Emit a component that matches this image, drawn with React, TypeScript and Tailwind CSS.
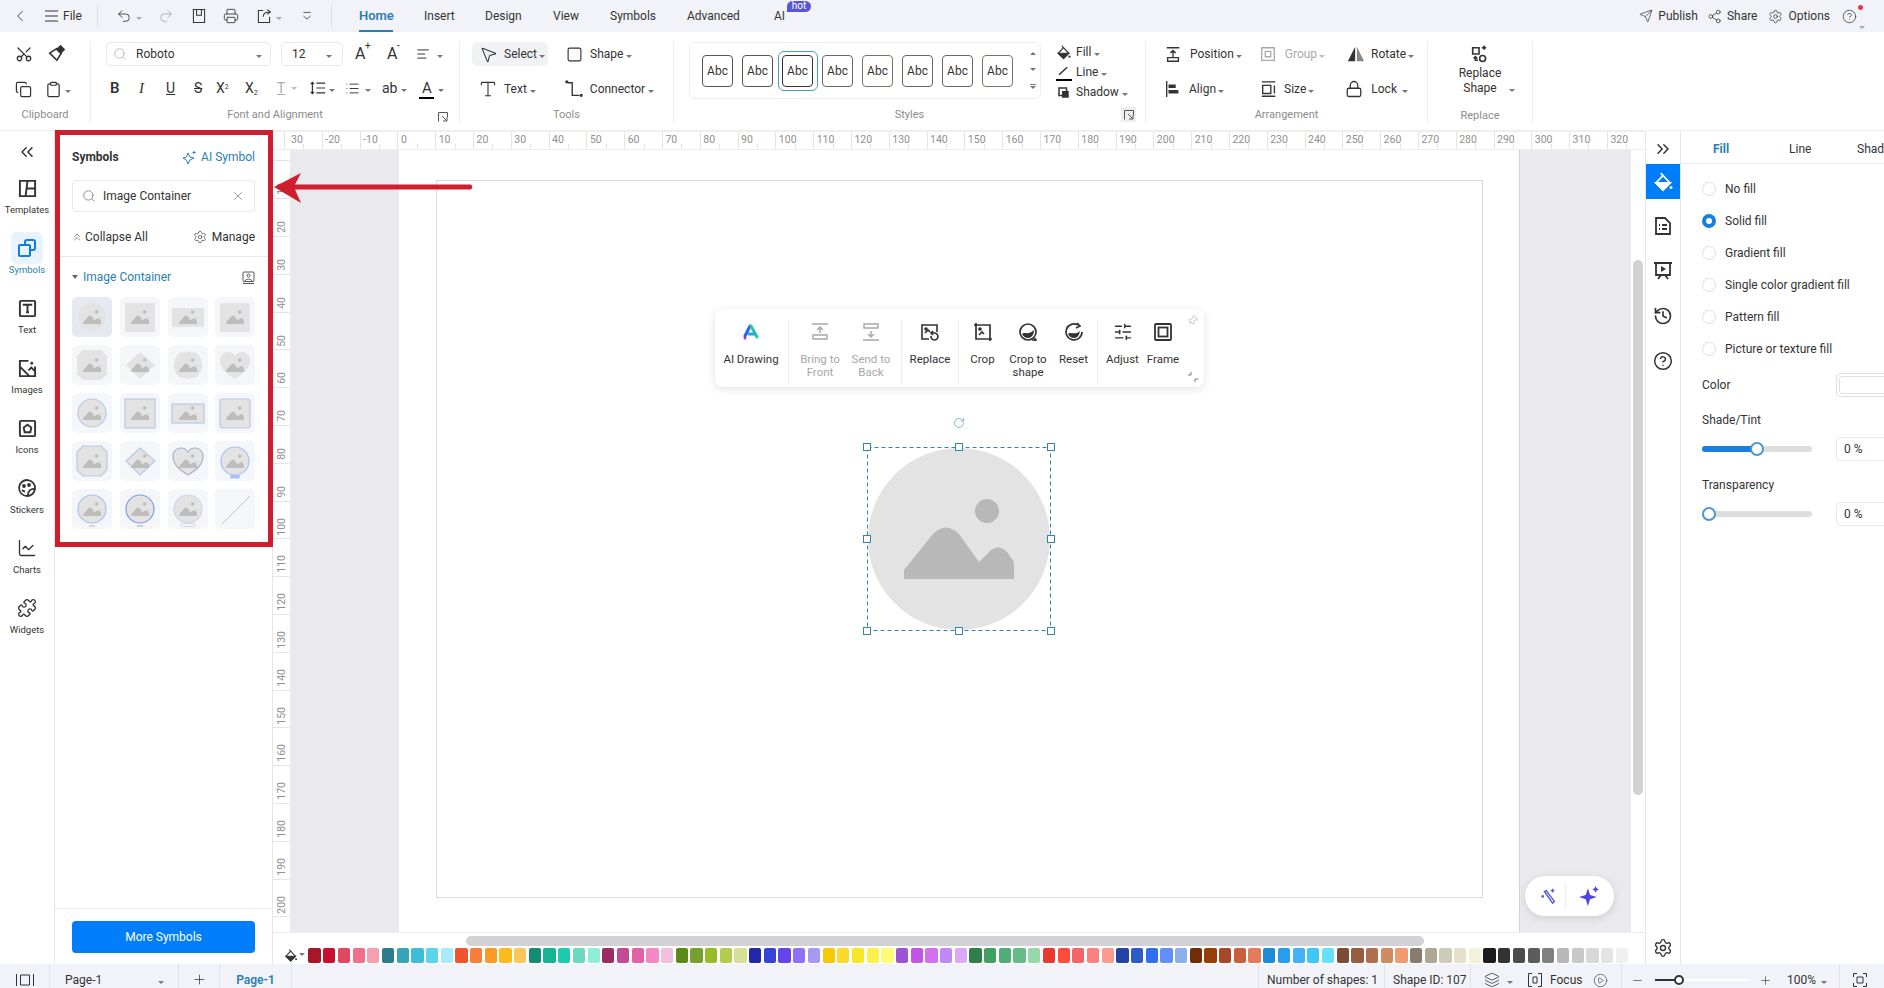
import React from "react";
import {
  ChevronLeft, Undo2, Redo2, Printer, Scissors, Copy, Clipboard, AlignLeft, List, MousePointer2, Square, Type, Send, Share2,
  Settings, CircleHelp, Lock, Search, X, ChevronsUp, ChevronsLeft, ChevronsRight, History, RotateCw, Pin, Minus, Plus, Layers,
  CirclePlay, Puzzle, ChartLine, SlidersHorizontal,
} from "lucide-react";

const Caret = ({ c = "border-t-[#777]" }: { c?: string }) => (
  <span className={`inline-block w-0 h-0 border-l-[3px] border-r-[3px] border-t-[3px] border-l-transparent border-r-transparent ${c}`} />
);

const Svg = ({ s = 18, children, w = 1.5, className = "" }: { s?: number; children: React.ReactNode; w?: number; className?: string }) => (
  <svg width={s} height={s} viewBox="0 0 20 20" fill="none" stroke="currentColor" strokeWidth={w} className={className}>{children}</svg>
);

const Bucket = ({ s = 15, w = 1.6 }: { s?: number; w?: number }) => (
  <svg width={s} height={s} viewBox="0 0 20 20" fill="none" stroke="currentColor" strokeWidth={w}>
    <path d="M8 1L10 4" />
    <path d="M10 3.500L17 11L10 18L3 11Z" />
    <path d="M3 11H17L10 18Z" fill="currentColor" />
    <circle cx="18" cy="15.500" r="1.500" fill="currentColor" stroke="none" />
  </svg>
);

const mountain = "M37 132V123L66 87Q79 74 92 87L112 115L122 105Q131 96 140 105L147 115V132Z";

const TABS: [string, string][] = [["Insert", "w-[61px]"], ["Design", "w-[68px]"], ["View", "w-[57px]"], ["Symbols", "w-[77px]"], ["Advanced", "w-[87px]"]];

function TopBar() {
  return (
    <div className="h-8 bg-[#f2f3f8] flex items-center text-[12px] text-[#333] shrink-0">
      <ChevronLeft size={18} strokeWidth={1.2} className="ml-[11px]" />
      <svg width="14" height="12" viewBox="0 0 14 12" stroke="#333" strokeWidth="1.2" className="ml-[16px]"><path d="M0 1H13M0 6H13M0 11H13" /></svg>
      <span className="ml-[4px] w-[34px]">File</span>
      <span className="w-px h-[20px] bg-[#dcdde3]" />
      <Undo2 size={16} strokeWidth={1.3} className="ml-[18px]" />
      <span className="ml-[4px]"><Caret c="border-t-[#aaa]" /></span>
      <Redo2 size={16} strokeWidth={1.3} className="ml-[16px] text-[#aaa]" />
      <Svg s={16} w={1.3} className="ml-[17px]"><path d="M3 2H17V18H3Z M7 2V9H13V2" /></Svg>
      <Printer size={16} strokeWidth={1.3} className="ml-[16px]" />
      <Svg s={16} w={1.3} className="ml-[17px]"><path d="M9 3H3V18H17V11M9 11C9 7 12 5 17 5M14 2L18 5L14 8" /></Svg>
      <span className="ml-[4px]"><Caret c="border-t-[#aaa]" /></span>
      <Svg s={12} w={1.3} className="ml-[19px]"><path d="M4 4H16M4 10L10 15L16 10" /></Svg>
      <span className="ml-[18px] w-px h-[20px] bg-[#dcdde3]" />
      <div className="ml-[27px] w-[65px] h-full relative flex items-center">
        <span className="text-[13px] font-semibold text-[#2a7fb0]">Home</span>
        <span className="absolute left-0 bottom-0 w-[34px] h-[2px] bg-[#2a7fb0]" />
      </div>
      {TABS.map(([t, w]) => (
        <span key={t} className={w}>{t}</span>
      ))}
      <span className="relative">AI<span className="absolute left-[13px] top-[-6px] w-[24px] h-[11px] rounded-[6px_6px_6px_0] bg-[#5a55d8] text-white text-[10px] leading-[10px] text-center">hot</span></span>
      <div className="ml-auto flex items-center">
        <Send size={14} strokeWidth={1.2} />
        <span className="ml-[5px]">Publish</span>
        <Share2 size={15} strokeWidth={1.2} className="ml-[9px]" />
        <span className="ml-[5px]">Share</span>
        <Settings size={15} strokeWidth={1.2} className="ml-[11px]" />
        <span className="ml-[5px]">Options</span>
        <span className="relative ml-[12px] mr-[27px] flex items-center">
          <CircleHelp size={15} strokeWidth={1.2} />
          <span className="absolute left-[16px] top-[-4px] w-[5px] h-[5px] rounded-full bg-[#ee3344]" />
          <span className="absolute left-[17px] top-[7px]"><Caret c="border-t-[#aaa]" /></span>
        </span>
      </div>
    </div>
  );
}

function Group({ className, label, children, labelClass = "justify-center" }: { className: string; label: string; children: React.ReactNode; labelClass?: string }) {
  return (
    <div className={`h-[81px] border-r border-[#eeeeee] flex flex-col ${className}`}>
      <div className="h-[59px] flex flex-col gap-[11px]">{children}</div>
      <div className={`h-[14px] mt-[7px] flex items-center text-[11px] text-[#8c8c8c] ${labelClass}`}>{label}</div>
    </div>
  );
}

const Launcher = () => (
  <svg width="10" height="10" viewBox="0 0 10 10" fill="none" stroke="#555" strokeWidth="1"><path d="M0.5 9.5V0.5H9.5V5M4 4L8.5 8.5M5 9H9V5" /></svg>
);

const Row = ({ children }: { children: React.ReactNode }) => <div className="h-6 flex items-center text-[12px] text-[#333]">{children}</div>;

const ABCS = ["border-[#555]", "border-[#555]", "border-[#333]", "border-[#666]", "border-[#7a7466]", "border-[#666]", "border-[#666]", "border-[#7a7466]"];

function Ribbon() {
  return (
    <div className="h-[99px] bg-white shrink-0 flex pt-[10px] border-b border-[#eeeeee] text-[#333]">
      <Group className="w-[91px]" label="Clipboard">
        <Row>
          <Scissors size={18} strokeWidth={1.7} className="ml-[15px] -rotate-90" />
          <Svg s={18} w={1.8} className="ml-[14px]"><path d="M3 9L11 4L16 9L11 17Z" /><path d="M11 5L15 1L19 5L15 9Z" fill="currentColor" /></Svg>
        </Row>
        <Row>
          <Copy size={17} strokeWidth={1.7} className="ml-[15px]" />
          <Clipboard size={17} strokeWidth={1.7} className="ml-[13px]" />
          <span className="ml-[3px]"><Caret /></span>
        </Row>
      </Group>
      <Group className="w-[369px]" label="Font and Alignment">
        <Row>
          <div className="ml-[15px] w-[165px] h-6 rounded-[5px] border border-[#e8e8e8] flex items-center px-[6px]">
            <Search size={14} strokeWidth={1.3} className="text-[#aaa]" />
            <span className="ml-[9px]">Roboto</span>
            <span className="ml-auto mr-[2px]"><Caret /></span>
          </div>
          <div className="ml-[10px] w-[62px] h-6 rounded-[5px] border border-[#e8e8e8] flex items-center pl-[10px] pr-[12px]">
            <span>12</span>
            <span className="ml-auto mr-[-2px]"><Caret /></span>
          </div>
          <span className="ml-[12px] text-[16px] w-[32px] relative">A<span className="absolute left-[10px] top-[-4px] text-[10px]">+</span></span>
          <span className="text-[16px] w-[24px] relative">A<span className="absolute left-[10px] top-[-4px] text-[10px]">-</span></span>
          <AlignLeft size={14} strokeWidth={1.7} className="ml-[5px]" />
          <span className="ml-[7px]"><Caret /></span>
        </Row>
        <Row>
          <span className="ml-[19px] w-[29px] text-[15px] font-semibold">B</span>
          <span className="w-[27px] text-[15px] italic font-['Liberation_Serif',serif]">I</span>
          <span className="w-[28px] text-[14px] underline">U</span>
          <span className="w-[22px] text-[14px] line-through">S</span>
          <span className="w-[29px] text-[14px]">X<sup className="text-[7px]">2</sup></span>
          <span className="w-[32px] text-[14px]">X<sub className="text-[7px]">2</sub></span>
          <span className="w-[14px] text-[14px] text-[#aaa] underline">T</span>
          <Caret c="border-t-[#bbb]" />
          <Svg s={16} className="ml-[13px]"><path d="M8 4H19M8 10H19M8 16H19M3 3V17M1 5L3 3L5 5M1 15L3 17L5 15" /></Svg>
          <span className="ml-[3px]"><Caret /></span>
          <List size={15} strokeWidth={1.5} className="ml-[10px]" />
          <span className="ml-[5px]"><Caret /></span>
          <span className="ml-[11px] text-[14px]">ab</span>
          <span className="ml-[4px]"><Caret /></span>
          <span className="ml-[12px] relative text-[15px] leading-[16px] w-[15px] text-center">A<span className="absolute left-0 right-0 bottom-[-3px] h-[2px] bg-black" /></span>
          <span className="ml-[4px]"><Caret /></span>
        </Row>
        <span className="relative self-end mr-[11px] mt-[-3px] h-0"><span className="absolute top-[4px] right-0"><Launcher /></span></span>
      </Group>
      <Group className="w-[214px]" label="Tools">
        <Row>
          <div className="ml-[12px] w-[76px] h-6 rounded-[5px] bg-[#f0f2f6] flex items-center pl-[7px]">
            <MousePointer2 size={19} strokeWidth={1.3} />
            <span className="ml-[6px]">Select</span>
            <span className="ml-[2px]"><Caret /></span>
          </div>
          <Square size={17} strokeWidth={1.6} className="ml-[18px]" />
          <span className="ml-[7px]">Shape</span>
          <span className="ml-[3px]"><Caret /></span>
        </Row>
        <Row>
          <Type size={20} strokeWidth={1.3} className="ml-[18px]" />
          <span className="ml-[6px]">Text</span>
          <span className="ml-[3px]"><Caret /></span>
          <Svg s={18} className="ml-[29px]"><path d="M3 3H8V17H16" /><circle cx="2" cy="2" r="1" fill="currentColor" /><circle cx="18" cy="17" r="1" fill="currentColor" /></Svg>
          <span className="ml-[7px]">Connector</span>
          <span className="ml-[3px]"><Caret /></span>
        </Row>
      </Group>
      <div className="w-[472px] h-[81px] border-r border-[#eeeeee] flex flex-col">
        <div className="flex">
          <div className="ml-[15px] w-[352px] h-[57px] rounded-[6px] border border-[#eeeeee] flex items-center pl-[12px] shrink-0">
            {ABCS.map((c, i) => (
              <div key={i} className={i === 2 ? "w-[40px] h-[40px] rounded-[6px] border border-[#4a9cc4] flex items-center justify-center -mx-[4.5px] shrink-0" : "w-[31px] h-[32px] shrink-0"}>
                <div className={`w-[31px] h-[32px] rounded-[4px] border ${c} flex items-center justify-center text-[12px]`}>Abc</div>
              </div>
            )).flatMap((el, i) => (i === 0 ? [el] : [<span key={`g${i}`} className="w-[9px] shrink-0" />, el]))}
            <div className="ml-[17px] flex flex-col items-center gap-[13px] text-[#777]">
              <span className="rotate-180 flex"><Caret /></span>
              <Caret />
              <span className="flex flex-col items-center gap-[1px]"><span className="w-[6px] h-px bg-[#777]" /><Caret /></span>
            </div>
          </div>
          <div className="ml-[15px] flex flex-col text-[12px] h-[60px]">
            <div className="h-[20px] flex items-center">
              <Bucket />
              <span className="ml-[5px]">Fill</span><span className="ml-[3px]"><Caret /></span>
            </div>
            <div className="h-[20px] flex items-center relative">
              <Svg s={15} w={2}><path d="M4 13L15 3" /></Svg>
              <span className="absolute left-0 bottom-[1px] w-[16px] h-[2px] bg-black" />
              <span className="ml-[5px]">Line</span><span className="ml-[3px]"><Caret /></span>
            </div>
            <div className="h-[20px] flex items-center">
              <Svg s={15} w={2}><path d="M4 4H14V14H4Z" /><path d="M8 8H17V17H8Z" fill="currentColor" stroke="none" /></Svg>
              <span className="ml-[5px]">Shadow</span><span className="ml-[3px]"><Caret /></span>
            </div>
          </div>
        </div>
        <div className="relative h-[14px] mt-[6px] flex items-center justify-center text-[11px] text-[#8c8c8c]">
          Styles
          <span className="absolute right-[9px] top-[-1px] w-[15px] h-[15px] bg-[#eeeeee] flex items-center justify-center"><Launcher /></span>
        </div>
      </div>
      <Group className="w-[282px]" label="Arrangement">
        <Row>
          <Svg s={18} className="ml-[18px]"><path d="M3 3H17M10 14V6M7 9L10 6L13 9M4 14H16V18H4Z" /></Svg>
          <span className="ml-[8px]">Position</span><span className="ml-[2px]"><Caret /></span>
          <Svg s={18} className="ml-[17px] text-[#aaa]"><path d="M3 3H17V17H3Z M7 7H13V13H7Z" /></Svg>
          <span className="ml-[8px] text-[#aaa]">Group</span><span className="ml-[2px]"><Caret c="border-t-[#bbb]" /></span>
          <Svg s={18} className="ml-[22px]" w={0}><path d="M9 2V18H1Z" fill="#333" /><path d="M11 2V18H19Z" fill="#888" /></Svg>
          <span className="ml-[6px]">Rotate</span><span className="ml-[2px]"><Caret /></span>
        </Row>
        <Row>
          <Svg s={18} className="ml-[18px]"><path d="M3 1V19" /><path d="M5 5H13V9H5ZM5 11H16V15H5Z" fill="currentColor" stroke="none" /></Svg>
          <span className="ml-[7px]">Align</span><span className="ml-[2px]"><Caret /></span>
          <Svg s={18} className="ml-[36px]"><path d="M2 2H17M2 18H17M3 6H12V15H3ZM16 6V15" /></Svg>
          <span className="ml-[6px]">Size</span><span className="ml-[2px]"><Caret /></span>
          <Lock size={18} strokeWidth={1.7} className="ml-[31px]" />
          <span className="ml-[8px]">Lock</span><span className="ml-[5px]"><Caret /></span>
        </Row>
      </Group>
      <div className="w-[105px] h-[81px] border-r border-[#eeeeee] flex flex-col items-center text-[12px] leading-[15px]">
        <Svg s={18} className="mt-[3px] mr-[2px]" w={1.8}><path d="M3 3H10V10H3Z" /><circle cx="14" cy="15" r="3.3" /><path d="M13 3H17M15 1L17 3L15 5M6 13V17H9M4 15L6 13L8 15" /></Svg>
        <span className="mt-[3px]">Replace</span>
        <span className="relative">Shape<span className="absolute left-[46px] top-0"><Caret /></span></span>
        <span className="mt-[12px] text-[11px] text-[#8c8c8c]">Replace</span>
      </div>
    </div>
  );
}

const Rail = ({ label, active, icon }: { label: string; active?: boolean; icon: React.ReactNode }) => (
  <div className={`h-[60px] flex flex-col items-center pt-[3px] text-[9.5px] ${active ? "text-[#2a7fb0]" : "text-[#333]"}`}>
    <div className={`w-8 h-8 rounded-[6px] flex items-center justify-center ${active ? "bg-[#e9f3fd]" : ""}`}>{icon}</div>
    <span className="-mt-px leading-[14px]">{label}</span>
  </div>
);

function LeftRail() {
  return (
    <div className="w-[55px] shrink-0 flex flex-col items-stretch border-r border-[#e6e6e6]">
      <div className="h-[42px] -mb-[4px] flex items-center justify-center"><ChevronsLeft size={20} strokeWidth={1.8} className="text-[#333]" /></div>
      <Rail label="Templates" icon={<Svg s={19} w={2}><path d="M2 2H18V18H2ZM10 2L8 18M9 10H18" /></Svg>} />
      <Rail label="Symbols" active icon={<Svg s={20} w={2} className="text-[#0b7ee0]"><path d="M8 7V4C8 3 9 2 10 2H16C17 2 18 3 18 4V10C18 11 17 12 16 12H13M3 7H12C12.500 7 13 7.500 13 8V17C13 17.500 12.500 18 12 18H3C2.500 18 2 17.500 2 17V8C2 7.500 2.500 7 3 7Z" /></Svg>} />
      <Rail label="Text" icon={<Svg s={19} w={2}><rect x="2" y="2" width="16" height="16" rx="1" /><path d="M6 7V6H14V7M10 6V14M8.500 14H11.500" /></Svg>} />
      <Rail label="Images" icon={<Svg s={19} w={2}><path d="M11 2H2V18H18V8M2 8L12 18M11 12L14 9L18 13" /><circle cx="14.500" cy="4.500" r="1.500" fill="currentColor" stroke="none" /></Svg>} />
      <Rail label="Icons" icon={<Svg s={19} w={2}><rect x="2" y="2" width="16" height="16" rx="1" /><path d="M10 6L14 9L13 14H7L6 9Z" /></Svg>} />
      <Rail label="Stickers" icon={<Svg s={20} w={1.8}><path d="M18 11A8 8 0 1 0 10 18C14 18 17 15 18 11ZM18 11C14 10 11 13 11 17" /><circle cx="7" cy="8" r="1" fill="currentColor" /><circle cx="12" cy="7" r="1" fill="currentColor" /><path d="M5 12C6 13 7 13.500 8 13.500" /></Svg>} />
      <Rail label="Charts" icon={<ChartLine size={20} strokeWidth={1.6} />} />
      <Rail label="Widgets" icon={<Puzzle size={20} strokeWidth={1.6} />} />
    </div>
  );
}

type V = "circle" | "square" | "wide" | "round" | "oct" | "diamond" | "scallop" | "heart" | "line";

const shapes: Record<string, React.ReactNode> = {
  circle: <circle cx="20" cy="20" r="14" />,
  square: <rect x="5" y="6" width="30" height="29" />,
  wide: <rect x="4" y="11" width="32" height="19" />,
  round: <rect x="5" y="6" width="30" height="29" rx="2.500" />,
  oct: <path d="M11 5H29L35 11V29L29 35H11L5 29V11Z" />,
  diamond: <path d="M20 7L35 20L20 34L6 20Z" />,
  scallop: <path d="M20 6L24 7.500L28 7.500L31 10.500L33 14L34 18V22L33 26L31 29.500L28 32.500L24 33L20 34L16 33L12 32.500L9 29.500L7 26L6 22V18L7 14L9 10.500L12 7.500L16 7.500Z" />,
  heart: <path d="M20 34C12 29 5 24 5 15C5 10 9 7 13 7C16 7 18.500 8.500 20 11C21.500 8.500 24 7 27 7C31 7 35 10 35 15C35 24 28 29 20 34Z" />,
};

function Thumb({ v, blue, extra, sel, stroke = "#b9c9e6" }: { v: V; blue?: boolean; extra?: React.ReactNode; sel?: boolean; stroke?: string }) {
  return (
    <div className={`w-10 h-10 rounded-[5px] ${sel ? "bg-[#e6e9f2]" : "bg-[#f5f6fa]"}`}>
      <svg width="40" height="40" viewBox="0 0 40 40">
        {v === "line" ? (
          <path d="M7 35L35 7" stroke="#a8a8a8" strokeWidth="0.700" />
        ) : (
          <>
            <g fill="#e3e3e3" stroke={blue ? stroke : "none"} strokeWidth="1.200">{shapes[v]}</g>
            <circle cx="24.700" cy="15" r="1.800" fill="#bdbdbd" />
            <path d="M11.300 27V25L16.500 19.200Q18 17.800 19.500 19.200L22.800 23.500L24.500 21.800Q26 20.500 27.500 21.800L29 24V27Z" fill="#bdbdbd" />
            {extra}
          </>
        )}
      </svg>
    </div>
  );
}

function SymbolsPanel() {
  return (
    <div className="w-[218px] shrink-0 flex flex-col border-r border-[#e6e6e6] text-[12px] text-[#333]">
      <div className="h-[126px] px-[17px] pt-[19px] border-b border-[#e8e8e8] flex flex-col">
        <div className="flex items-center h-[14px]">
          <span className="font-bold">Symbols</span>
          <span className="ml-auto flex items-center text-[#2a7fb0]">
            <svg width="15" height="15" viewBox="0 0 15 15" fill="none" stroke="currentColor" strokeWidth="1"><path d="M6 3L8 7L12 8L8 10L6 14L4.500 10L1 8L4.500 7Z" /><path d="M12 1V4M10.500 2.500H13.500" /></svg>
            <span className="ml-[4px]">AI Symbol</span>
          </span>
        </div>
        <div className="mt-[16px] h-[32px] rounded-[4px] border border-[#e8e8e8] flex items-center px-[9px]">
          <Search size={14} strokeWidth={1.6} className="text-[#888]" />
          <span className="ml-[7px]">Image Container</span>
          <X size={14} strokeWidth={1} className="ml-auto text-[#555]" />
        </div>
        <div className="mt-[16px] flex items-center">
          <ChevronsUp size={12} strokeWidth={1.2} className="-ml-px" />
          <span className="ml-[2px]">Collapse All</span>
          <Settings size={14} strokeWidth={1.1} className="ml-auto" />
          <span className="ml-[5px]">Manage</span>
        </div>
      </div>
      <div className="px-[17px] pt-[13px] flex-1">
        <div className="flex items-center h-[14px] text-[#2a7fb0]">
          <span className="w-0 h-0 border-l-[3.5px] border-r-[3.5px] border-t-[4px] border-l-transparent border-r-transparent border-t-[#666]" />
          <span className="ml-[5px]">Image Container</span>
          <svg className="ml-auto" width="13" height="13" viewBox="0 0 13 13" fill="none" stroke="#444" strokeWidth="0.900"><rect x="1" y="1" width="11" height="9.500" rx="1" /><circle cx="6.500" cy="4.500" r="1.500" /><path d="M3 10C3.500 7.500 9.500 7.500 10 10M1 12.500H12" /></svg>
        </div>
        <div className="mt-[13px] grid grid-cols-4 gap-2">
          <Thumb v="circle" sel /><Thumb v="square" /><Thumb v="wide" /><Thumb v="round" />
          <Thumb v="oct" /><Thumb v="diamond" /><Thumb v="scallop" /><Thumb v="heart" />
          <Thumb v="circle" blue /><Thumb v="square" blue /><Thumb v="wide" blue /><Thumb v="round" blue />
          <Thumb v="oct" blue /><Thumb v="diamond" blue /><Thumb v="heart" blue stroke="#a8b2c8" /><Thumb v="circle" blue stroke="#a9c0f0" extra={<rect x="15" y="34" width="10" height="3.500" rx="1.700" fill="#a9c0f0" />} />
          <Thumb v="circle" blue stroke="#a9c0f0" extra={<path d="M17 37H23" stroke="#999" strokeWidth="0.600" />} />
          <Thumb v="circle" blue stroke="#7f9fe0" extra={<path d="M17 37H23" stroke="#999" strokeWidth="0.800" />} />
          <Thumb v="circle" blue stroke="#cdd6ea" extra={<rect x="13" y="34.500" width="14" height="3" rx="1.500" fill="none" stroke="#b9c9e6" strokeWidth="0.600" />} />
          <Thumb v="line" />
        </div>
      </div>
      <div className="h-[56px] border-t border-[#e8e8e8] px-[17px] pt-[12px]">
        <div className="h-[32px] rounded-[4px] bg-[#007dfb] text-white flex items-center justify-center">More Symbols</div>
      </div>
    </div>
  );
}

const XLAB = ["30", "-20", "-10", "0", "10", "20", "30", "40", "50", "60", "70", "80", "90", "100", "110", "120", "130", "140", "150", "160", "170", "180", "190", "200", "210", "220", "230", "240", "250", "260", "270", "280", "290", "300", "310", "320"];
const YLAB = ["10", "20", "30", "40", "50", "60", "70", "80", "90", "100", "110", "120", "130", "140", "150", "160", "170", "180", "190", "200"];

const PALETTE = [
  "bg-[#a5182a]", "bg-[#c8102e]", "bg-[#e04862]", "bg-[#f0708a]", "bg-[#f5a0b0]",
  "bg-[#2a7c8e]", "bg-[#38a4bc]", "bg-[#3fbcd8]", "bg-[#5cd4ec]", "bg-[#a8ecfb]",
  "bg-[#f0552c]", "bg-[#f77f3c]", "bg-[#fb9a24]", "bg-[#fcbb1c]", "bg-[#fbc65c]",
  "bg-[#128c74]", "bg-[#16b394]", "bg-[#1ecbad]", "bg-[#6cd8c0]", "bg-[#90eed8]",
  "bg-[#9b2c64]", "bg-[#c24c94]", "bg-[#e260a8]", "bg-[#f487c4]", "bg-[#f0c0dc]",
  "bg-[#5c8a18]", "bg-[#78a030]", "bg-[#98bc28]", "bg-[#b4cc4c]", "bg-[#d4e098]",
  "bg-[#2028a8]", "bg-[#3444d8]", "bg-[#6444ec]", "bg-[#9070f8]", "bg-[#a898f4]",
  "bg-[#f8c808]", "bg-[#fcd82c]", "bg-[#f4e828]", "bg-[#fcf04c]", "bg-[#fcfc78]",
  "bg-[#9c54d4]", "bg-[#c454e4]", "bg-[#d470ec]", "bg-[#c088f4]", "bg-[#dca8f8]",
  "bg-[#2f8048]", "bg-[#40a060]", "bg-[#50ac78]", "bg-[#64bc88]", "bg-[#98d8a8]",
  "bg-[#e83830]", "bg-[#fc4c3c]", "bg-[#f46468]", "bg-[#fc8080]", "bg-[#fc9c90]",
  "bg-[#2444a4]", "bg-[#2c5cc8]", "bg-[#3070f0]", "bg-[#6090f8]", "bg-[#8cb0ec]",
  "bg-[#742c08]", "bg-[#983c08]", "bg-[#a84828]", "bg-[#c86040]", "bg-[#e47c5c]",
  "bg-[#1c8cd8]", "bg-[#2c9cec]", "bg-[#44b0f8]", "bg-[#40c8f4]", "bg-[#68e0fc]",
  "bg-[#7c4c34]", "bg-[#985c40]", "bg-[#b07050]", "bg-[#d08c60]", "bg-[#f09c70]",
  "bg-[#887c70]", "bg-[#aca894]", "bg-[#ccccb8]", "bg-[#e4e0cc]", "bg-[#f4f0dc]",
  "bg-[#1c1c1c]", "bg-[#333333]", "bg-[#4c4c4c]", "bg-[#5c5c5c]", "bg-[#808080]",
  "bg-[#b8b8b8]", "bg-[#c8c8c8]", "bg-[#d8d8d8]", "bg-[#e4e4e4]", "bg-[#f0f0f0]",
  "bg-[#ffffff]",
];

const Tool = ({ icon, l1, l2, w, dim }: { icon: React.ReactNode; l1: string; l2?: string; w: string; dim?: boolean }) => (
  <div className={`${w} flex flex-col items-center text-[11.5px] leading-[13px] ${dim ? "text-[#a8a8a8]" : "text-[#333]"}`}>
    <div className="h-[22px] flex items-center -mt-px">{icon}</div>
    <span className="mt-[10px] whitespace-nowrap">{l1}</span>
    {l2 && <span className="whitespace-nowrap">{l2}</span>}
  </div>
);
const VSep = () => <span className="w-px h-[64px] bg-[#eeeeee] self-center" />;

function FloatBar() {
  return (
    <div className="absolute left-[425px] top-[159px] w-[489px] h-[78px] bg-white rounded-[8px] shadow-[0_2px_10px_rgba(0,0,0,0.12)] flex pt-[13px] items-start">
      <Tool w="w-[72px] mr-px" l1="AI Drawing" icon={
        <svg width="18" height="18" viewBox="0 0 18 18" fill="none" strokeWidth="3" strokeLinecap="round"><path d="M8 3L3 13" stroke="#2563eb" /><path d="M9 3L15 14" stroke="#22c9a8" /><path d="M7 11H12" stroke="#2aa0e0" /><circle cx="3" cy="15" r="1.500" fill="#c026d3" stroke="none" /></svg>
      } />
      <div className="self-stretch flex items-start -mt-[6px]"><VSep /></div>
      <Tool w="w-[62px]" dim l1="Bring to" l2="Front" icon={<Svg s={20} w={1.4}><path d="M2 2H18M10 11V5M7 8L10 5L13 8M3 13H17V17H3Z" /></Svg>} />
      <Tool w="w-[40px] mr-[10px]" dim l1="Send to" l2="Back" icon={<Svg s={20} w={1.4}><path d="M3 2H17V6H3ZM10 9V15M7 12L10 15L13 12M2 18H18" /></Svg>} />
      <div className="self-stretch flex items-start -mt-[6px]"><VSep /></div>
      <Tool w="w-[56px]" l1="Replace" icon={<Svg s={20} w={1.6}><path d="M9 17H2V3H17V10M5 11L8 8L10 10" /><circle cx="6" cy="7" r="1" fill="currentColor" /><path d="M11 14A3.500 3.500 0 1 0 14 11H12M13 9L11 11L13 13" /></Svg>} />
      <div className="self-stretch flex items-start -mt-[6px]"><VSep /></div>
      <Tool w="w-[47px]" l1="Crop" icon={<Svg s={20} w={1.7}><path d="M1 3H17V19M3 1V17H19M6 13L9 10L11 12" /><circle cx="7" cy="7" r="1" fill="currentColor" /></Svg>} />
      <Tool w="w-[44px]" l1="Crop to" l2="shape" icon={<Svg s={20} w={1.7}><circle cx="10" cy="10" r="8" /><path d="M4 12C7 9 10 14 16 8C16 12 14 16 10 16C7 16 5 14 4 12Z" fill="currentColor" stroke="none" /><path d="M14 18H19M17 16V19" /></Svg>} />
      <Tool w="w-[47px]" l1="Reset" icon={<Svg s={20} w={1.7}><path d="M18 10A8 8 0 1 1 14 3M13 1L16 4L12 6" /><path d="M4 12C7 9 10 14 16 9C15 13 14 16 10 16C7 16 5 14 4 12Z" fill="currentColor" stroke="none" /></Svg>} />
      <div className="self-stretch flex items-start -mt-[6px]"><VSep /></div>
      <Tool w="w-[49px]" l1="Adjust" icon={<SlidersHorizontal size={20} strokeWidth={1.7} />} />
      <Tool w="w-[32px]" l1="Frame" icon={<Svg s={20} w={1.8}><rect x="2" y="2" width="16" height="16" rx="1" /><rect x="5.500" y="5.500" width="9" height="9" /></Svg>} />
      <Pin size={11} strokeWidth={1} className="absolute right-[6px] top-[6px] text-[#888] rotate-45" />
      <svg className="absolute right-[6px] bottom-[5px]" width="10" height="10" viewBox="0 0 10 10" fill="none" stroke="#777"><path d="M0 3H3V0M7 10V7H10" /></svg>
    </div>
  );
}

const Handle = ({ className }: { className: string }) => (
  <span className={`absolute w-[8px] h-[8px] bg-white border border-[#2f86a8] ${className}`} />
);

function Selection() {
  return (
    <div className="absolute left-[577px] top-[297px] w-[184px] h-[184px]">
      <RotateCw size={12} strokeWidth={1.2} className="absolute left-[86px] top-[-30px] text-[#3a8db0]" />
      <svg width="184" height="184" viewBox="0 0 184 184" className="absolute inset-0">
        <circle cx="92" cy="92" r="91" fill="#e3e3e3" />
        <circle cx="120" cy="64" r="12" fill="#b8b8b8" />
        <path d={mountain} fill="#b8b8b8" />
        <rect x="0.500" y="0.500" width="183" height="183" fill="none" stroke="#2f86a8" strokeDasharray="4 3" />
      </svg>
      <Handle className="left-[-4px] top-[-4px]" />
      <Handle className="left-[88px] top-[-4px]" />
      <Handle className="right-[-4px] top-[-4px]" />
      <Handle className="left-[-4px] top-[88px]" />
      <Handle className="right-[-4px] top-[88px]" />
      <Handle className="left-[-4px] bottom-[-4px]" />
      <Handle className="left-[88px] bottom-[-4px]" />
      <Handle className="right-[-4px] bottom-[-4px]" />
    </div>
  );
}

function Center() {
  return (
    <div className="w-[1373px] shrink-0 flex flex-col border-r border-[#e6e6e6]">
      <div className="h-[18px] flex overflow-hidden border-t border-[#eeeeee] shrink-0 pr-[14px]">
        <div className="w-[11px] shrink-0" />
        {XLAB.map((t, i) => (
          <div key={i} className="w-[37.8px] shrink-0 flex border-l border-[#e4e4e4] text-[10.5px] leading-[16px] text-[#8f8f8f]">
            <span className={`w-[18.4px] shrink-0 whitespace-nowrap ${i === 0 ? "pl-[6px]" : "pl-[2.5px]"}`}>{t}</span>
            <span className="self-end w-px h-[5px] bg-[#e4e4e4]" />
          </div>
        ))}
      </div>
      <div className="h-[783px] flex shrink-0 border-t border-[#eeeeee]">
        <div className="w-[17px] shrink-0 flex flex-col overflow-hidden">
          <div className="h-[11.400px] shrink-0 border-b border-[#e4e4e4]" />
          {YLAB.map((t) => (
            <div key={t} className="h-[37.8px] shrink-0 border-b border-[#e4e4e4] flex items-end justify-center pb-[3px]">
              <span className="[writing-mode:vertical-rl] rotate-180 text-[10.5px] leading-[14px] text-[#8f8f8f]">{t}</span>
            </div>
          ))}
        </div>
        <div className="relative w-[1341px] shrink-0 bg-[#e9e9ee] overflow-hidden">
          <div className="ml-[109px] w-[1121px] h-full bg-white pt-[30px] px-[37px] border-r border-[#d4d4d8]">
            <div className="w-[1047px] h-[718px] border border-[#d9d9d9]" />
          </div>
          <FloatBar />
          <Selection />
          <div className="absolute left-[1235px] top-[726px] w-[89px] h-[40px] rounded-full bg-white shadow-[0_2px_8px_rgba(0,0,0,0.12)] flex items-center">
            <Svg s={18} w={1.6} className="ml-[15px] text-[#5b5bd6]"><path d="M5 5L14 18L16 16L7 4Z" /><path d="M14 2V6M12 4H16M3 9V12M1.500 10.500H4.500" /></Svg>
            <span className="ml-[7px] w-px h-[24px] bg-[#eeeeee]" />
            <svg className="ml-[12px]" width="22" height="22" viewBox="0 0 20 20" fill="#4f46e5"><path d="M9 3L11 9L17 11L11 13L9 19L7 13L1 11L7 9Z" /><path d="M16 1L17 3L19 4L17 5L16 7L15 5L13 4L15 3Z" /></svg>
          </div>
        </div>
        <div className="w-[14px] shrink-0 pl-[2px]">
          <div className="mt-[110px] w-[10px] h-[535px] rounded-full bg-[#d2d2d4]" />
        </div>
      </div>
      <div className="h-[15px] border-t border-[#eeeeee] shrink-0 pl-[193px] pt-[3px]">
        <div className="w-[958px] h-[10px] rounded-full bg-[#d2d2d4]" />
      </div>
      <div className="h-[17px] flex items-start shrink-0 pl-[11px] pt-[1px] text-[#333]">
        <Bucket s={15} />
        <span className="mt-[5px] ml-[2px] mr-[3px] flex"><Caret /></span>
        {PALETTE.map((c, i) => (
          <span key={i} className={`w-[12.300px] h-[15px] mr-[2.400px] rounded-[2px] shrink-0 ${c}`} />
        ))}
      </div>
    </div>
  );
}

const Radio = ({ on, label }: { on?: boolean; label: string }) => (
  <div className="h-[32px] flex items-center">
    <span className={on ? "w-[14px] h-[14px] rounded-full border-[4px] border-[#1a7fdc] bg-white" : "w-[14px] h-[14px] rounded-full border border-[#dddddd] bg-white"} />
    <span className="ml-[9px]">{label}</span>
  </div>
);

const Pct = () => (
  <div className="w-[60px] h-[24px] rounded-[4px] border border-[#e8e8e8] flex items-center pl-[7px] shrink-0">0 %</div>
);

function RightSide() {
  return (
    <>
      <div className="w-[35px] shrink-0 flex flex-col items-center border-r border-[#e6e6e6] text-[#333]">
        <div className="h-[33px] flex items-center pt-[2px]"><ChevronsRight size={20} strokeWidth={1.8} /></div>
        <div className="w-full h-[35px] bg-[#007dfb] flex items-center justify-center text-white">
          <Bucket s={20} w={1.8} />
        </div>
        <div className="mt-[17px] flex flex-col items-center gap-[25px]">
          <Svg s={20} w={1.8}><path d="M3 2H12L17 7V18H3Z M6 9H7M9 9H14M6 13H7M9 13H14" /></Svg>
          <Svg s={20} w={1.8}><path d="M1 2H19M3 2V14H17V2M5 18L8 14M15 18L12 14" /><path d="M8 5L13 8L8 11Z" fill="currentColor" stroke="none" /></Svg>
          <History size={20} strokeWidth={2} />
          <CircleHelp size={20} strokeWidth={1.8} />
        </div>
        <Settings size={20} strokeWidth={1.6} className="mt-auto mb-[6px]" />
      </div>
      <div className="flex-1 min-w-0 overflow-hidden text-[12px] text-[#333] flex flex-col">
        <div className="h-[33px] border-b border-[#eeeeee] flex items-center shrink-0 pt-[3px]">
          <span className="ml-[32px] w-[76px] shrink-0 font-bold text-[#2a7fb0]">Fill</span>
          <span className="w-[68px] shrink-0">Line</span>
          <span className="shrink-0 whitespace-nowrap">Shadow</span>
        </div>
        <div className="pl-[21px] pt-[9px]">
          <Radio label="No fill" />
          <Radio on label="Solid fill" />
          <Radio label="Gradient fill" />
          <Radio label="Single color gradient fill" />
          <Radio label="Pattern fill" />
          <Radio label="Picture or texture fill" />
          <div className="flex items-center h-[24px] mt-[8px]">
            <span className="w-[134px] shrink-0">Color</span>
            <div className="w-[60px] h-[24px] rounded-[4px] border border-[#e0e0e0] p-[2px] shrink-0"><div className="w-full h-full rounded-[3px] border border-[#e0e0e0]" /></div>
          </div>
          <div className="mt-[15px] leading-[16px]">Shade/Tint</div>
          <div className="mt-[9px] flex items-center w-[300px]">
            <div className="w-[110px] h-[6px] rounded-full bg-[#dddddd] relative mr-[24px] shrink-0">
              <div className="w-[55px] h-[6px] rounded-full bg-[#1a7fdc]" />
              <span className="absolute left-[48px] top-[-4px] w-[14px] h-[14px] rounded-full bg-white border-2 border-[#4a97d8]" />
            </div>
            <Pct />
          </div>
          <div className="mt-[16px] leading-[16px]">Transparency</div>
          <div className="mt-[9px] flex items-center w-[300px]">
            <div className="w-[110px] h-[6px] rounded-full bg-[#dddddd] relative mr-[24px] shrink-0">
              <span className="absolute left-0 top-[-4px] w-[14px] h-[14px] rounded-full bg-white border-2 border-[#4a97d8]" />
            </div>
            <Pct />
          </div>
        </div>
      </div>
    </>
  );
}

const BarSep = () => <span className="w-px h-[24px] bg-[#e2e3e8] shrink-0" />;

function StatusBar() {
  return (
    <div className="h-6 bg-[#f2f3f8] flex items-start text-[12px] text-[#333] shrink-0">
      <div className="w-[49px] h-[24px] flex items-center justify-center pt-[8px]">
        <svg width="18" height="12" viewBox="0 0 18 12" fill="none" stroke="#333"><path d="M0.500 0V12M4.500 1H13.500V11H4.500ZM17.500 0V12" /></svg>
      </div>
      <BarSep />
      <div className="w-[128px] h-[24px] flex items-center pt-[8px] pl-[15px]">
        <span>Page-1</span><span className="ml-auto mr-[14px]"><Caret c="border-t-[#777]" /></span>
      </div>
      <BarSep />
      <div className="w-[40px] h-[24px] flex items-center justify-center pt-[6px]"><Plus size={15} strokeWidth={1.2} /></div>
      <BarSep />
      <div className="w-[71px] h-[24px] flex items-center justify-center pt-[8px] font-semibold text-[#2a7fb0]">Page-1</div>
      <BarSep />
      <div className="ml-[966px] flex items-start">
        <BarSep />
        <span className="w-[125px] h-[24px] flex items-center pt-[8px] pl-[8px] whitespace-nowrap">Number of shapes: 1</span>
        <BarSep />
        <span className="w-[85px] h-[24px] flex items-center pt-[8px] pl-[8px] whitespace-nowrap">Shape ID: 107</span>
        <BarSep />
        <div className="w-[150px] h-[24px] flex items-center pt-[8px]">
          <Layers size={16} strokeWidth={1.2} className="ml-[13px]" />
          <span className="ml-[7px]"><Caret /></span>
          <svg className="ml-[15px]" width="14" height="14" viewBox="0 0 14 14" fill="none" stroke="#333"><path d="M4 0.500H0.500V13.500H4M10 0.500H13.500V13.500H10M5 4H9V10H5Z" /></svg>
          <span className="ml-[8px]">Focus</span>
          <CirclePlay size={15} strokeWidth={1} className="ml-[11px]" />
        </div>
        <BarSep />
        <div className="w-[217px] h-[24px] flex items-center pt-[8px]">
          <Minus size={13} strokeWidth={1.2} className="ml-[9px]" />
          <div className="ml-[11px] w-[94px] h-[2px] bg-white relative">
            <div className="w-[24px] h-[2px] bg-[#333]" />
            <span className="absolute left-[19px] top-[-4px] w-[10px] h-[10px] rounded-full bg-white border-2 border-[#333]" />
          </div>
          <Plus size={13} strokeWidth={1.2} className="ml-[10px]" />
          <span className="ml-[15px]">100%</span>
          <span className="ml-[5px]"><Caret /></span>
        </div>
        <BarSep />
        <div className="w-[40px] h-[24px] flex items-center justify-center pt-[8px]">
          <svg width="14" height="14" viewBox="0 0 14 14" fill="none" stroke="#333"><path d="M4 0.500H0.500V4M10 0.500H13.500V4M4 13.500H0.500V10M10 13.500H13.500V10M4 4H10V10H4Z" /></svg>
        </div>
      </div>
    </div>
  );
}

export default function App() {
  return (
    <div className="relative w-[1884px] h-[988px] overflow-hidden bg-white flex flex-col font-['Roboto',sans-serif]">
      <TopBar />
      <Ribbon />
      <div className="h-[833px] flex shrink-0">
        <LeftRail />
        <SymbolsPanel />
        <Center />
        <RightSide />
      </div>
      <StatusBar />
      <div className="absolute left-[55px] top-[130px] w-[218px] h-[417px] border-[5px] border-[#cf1f2e]" />
      <svg className="absolute left-[274px] top-[170px]" width="200" height="36" viewBox="0 0 200 36">
        <path d="M0 17L27 3L21 14.500H197Q199.500 17 197 19.500H21L27 33Z" fill="#cf1f2e" />
      </svg>
    </div>
  );
}
